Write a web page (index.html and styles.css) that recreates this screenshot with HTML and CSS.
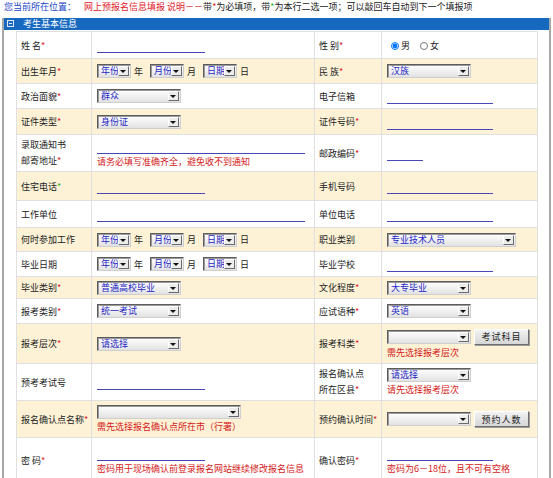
FILE: index.html
```html
<!DOCTYPE html>
<html lang="zh-CN">
<head>
    <meta charset="UTF-8">
    <title>网上预报名信息填报</title>
    <link rel="stylesheet" href="styles.css">
</head>
<body>
    <div class="location">
        <span class="loc-label">您当前所在位置：</span>
        <span class="loc-red">网上预报名信息填报</span>
        <span class="loc-red">说明－－</span>带<span class="req">*</span>为必填项，带<span class="alt-req">*</span>为本行二选一项；可以敲回车自动到下一个填报项
    </div>

    <div class="box">
        <div class="box-title"><span class="toggle"></span>考生基本信息</div>
        <table class="form">
            <colgroup>
                <col class="c-label1">
                <col class="c-value1">
                <col class="c-label2">
                <col class="c-value2">
            </colgroup>
            <tr class="h27">
                <td class="label">姓 名<span class="req">*</span></td>
                <td class="value"><input class="line w108" type="text"></td>
                <td class="label">性 别<span class="req">*</span></td>
                <td class="value">
                    <label class="radio"><input type="radio" name="sex" checked>男</label>
                    <label class="radio"><input type="radio" name="sex">女</label>
                </td>
            </tr>
            <tr class="h25 alt">
                <td class="label">出生年月<span class="req">*</span></td>
                <td class="value">
                    <span class="sel w34"><select><option>年份</option></select></span><span class="unit">年</span>
                    <span class="sel w34"><select><option>月份</option></select></span><span class="unit">月</span>
                    <span class="sel w34"><select><option>日期</option></select></span><span class="unit">日</span>
                </td>
                <td class="label">民 族<span class="req">*</span></td>
                <td class="value"><span class="sel w84"><select><option>汉族</option></select></span></td>
            </tr>
            <tr class="h25">
                <td class="label">政治面貌<span class="req">*</span></td>
                <td class="value"><span class="sel w84"><select><option>群众</option></select></span></td>
                <td class="label">电子信箱</td>
                <td class="value"><input class="line w106" type="text"></td>
            </tr>
            <tr class="h26 alt">
                <td class="label">证件类型<span class="req">*</span></td>
                <td class="value"><span class="sel w84"><select><option>身份证</option></select></span></td>
                <td class="label">证件号码<span class="req">*</span></td>
                <td class="value"><input class="line w106" type="text"></td>
            </tr>
            <tr class="h37">
                <td class="label two">录取通知书<br>邮寄地址<span class="req">*</span></td>
                <td class="value">
                    <input class="line w208" type="text">
                    <div class="note">请务必填写准确齐全，避免收不到通知</div>
                </td>
                <td class="label">邮政编码<span class="req">*</span></td>
                <td class="value"><input class="line w36" type="text"></td>
            </tr>
            <tr class="h29 alt">
                <td class="label">住宅电话<span class="alt-req">*</span></td>
                <td class="value"><input class="line w108" type="text"></td>
                <td class="label">手机号码</td>
                <td class="value"><input class="line w106" type="text"></td>
            </tr>
            <tr class="h27">
                <td class="label">工作单位</td>
                <td class="value"><input class="line w208" type="text"></td>
                <td class="label">单位电话</td>
                <td class="value"><input class="line w106" type="text"></td>
            </tr>
            <tr class="h24 alt">
                <td class="label">何时参加工作</td>
                <td class="value">
                    <span class="sel w34"><select><option>年份</option></select></span><span class="unit">年</span>
                    <span class="sel w34"><select><option>月份</option></select></span><span class="unit">月</span>
                    <span class="sel w34"><select><option>日期</option></select></span><span class="unit">日</span>
                </td>
                <td class="label">职业类别</td>
                <td class="value"><span class="sel w129"><select><option>专业技术人员</option></select></span></td>
            </tr>
            <tr class="h25">
                <td class="label">毕业日期</td>
                <td class="value">
                    <span class="sel w34"><select><option>年份</option></select></span><span class="unit">年</span>
                    <span class="sel w34"><select><option>月份</option></select></span><span class="unit">月</span>
                    <span class="sel w34"><select><option>日期</option></select></span><span class="unit">日</span>
                </td>
                <td class="label">毕业学校</td>
                <td class="value"><input class="line w106" type="text"></td>
            </tr>
            <tr class="h22 alt">
                <td class="label">毕业类别<span class="req">*</span></td>
                <td class="value"><span class="sel w84"><select><option>普通高校毕业</option></select></span></td>
                <td class="label">文化程度<span class="req">*</span></td>
                <td class="value"><span class="sel w84"><select><option>大专毕业</option></select></span></td>
            </tr>
            <tr class="h25">
                <td class="label">报考类别<span class="req">*</span></td>
                <td class="value"><span class="sel w84"><select><option>统一考试</option></select></span></td>
                <td class="label">应试语种<span class="req">*</span></td>
                <td class="value"><span class="sel w84"><select><option>英语</option></select></span></td>
            </tr>
            <tr class="h40 alt">
                <td class="label">报考层次<span class="req">*</span></td>
                <td class="value"><span class="sel w84"><select><option>请选择</option></select></span></td>
                <td class="label">报考科类<span class="req">*</span></td>
                <td class="value">
                    <span class="sel w84"><select><option></option></select></span><button class="btn">考试科目</button>
                    <div class="note">需先选择报考层次</div>
                </td>
            </tr>
            <tr class="h37">
                <td class="label">预考考试号</td>
                <td class="value"><input class="line w108" type="text"></td>
                <td class="label two">报名确认点<br>所在区县<span class="req">*</span></td>
                <td class="value">
                    <span class="sel w84"><select><option>请选择</option></select></span>
                    <div class="note">请先选择报考层次</div>
                </td>
            </tr>
            <tr class="h37 alt">
                <td class="label">报名确认点名称<span class="req">*</span></td>
                <td class="value">
                    <span class="sel w144"><select><option></option></select></span>
                    <div class="note">需先选择报名确认点所在市（行署）</div>
                </td>
                <td class="label">预约确认时间<span class="req">*</span></td>
                <td class="value"><span class="sel w84"><select><option></option></select></span><button class="btn">预约人数</button></td>
            </tr>
            <tr class="h45">
                <td class="label">密 码<span class="req">*</span></td>
                <td class="value">
                    <input class="line w108" type="password">
                    <div class="note">密码用于现场确认前登录报名网站继续修改报名信息</div>
                </td>
                <td class="label">确认密码<span class="req">*</span></td>
                <td class="value">
                    <input class="line w106" type="password">
                    <div class="note">密码为6－18位，且不可有空格</div>
                </td>
            </tr>
        </table>
    </div>
</body>
</html>
```

FILE: styles.css
```css
body {
    margin: 0;
    font-family: "Noto Sans CJK SC", "Noto Sans", sans-serif;
    font-size: 9px;
    color: #222;
    background: #fff;
}

.location {
    height: 18px;
    line-height: 14px;
    padding-left: 4px;
    white-space: nowrap;
}

.loc-label {
    color: #2446c8;
    margin-right: 6px;
}

.loc-red {
    color: #e0202a;
}

.req {
    color: #e0202a;
}

.alt-req {
    color: #2fb52f;
}

.box {
    margin-left: 2px;
    width: 545px;
    height: 460px;
    border-left: 2px solid #a8a8a8;
    border-right: 2px solid #a8a8a8;
}

.box-title {
    height: 12px;
    line-height: 12px;
    padding-left: 3px;
    background: #1769c0;
    color: #fff;
}

.toggle {
    display: inline-block;
    position: relative;
    width: 5px;
    height: 5px;
    margin-right: 9px;
    border: 1px solid #dfe9f5;
    vertical-align: 0;
}

.toggle::after {
    content: "";
    position: absolute;
    left: 1px;
    top: 2px;
    width: 3px;
    height: 1px;
    background: #dfe9f5;
}

.form {
    margin: 1px 0 0 12px;
    width: 521px;
    border-collapse: collapse;
    table-layout: fixed;
    border: 1px solid #d9d9d9;
}

.c-label1 { width: 75px; }
.c-value1 { width: 223px; }
.c-label2 { width: 67px; }
.c-value2 { width: 156px; }

.form td {
    border: 1px solid #e0e0e0;
    padding: 0;
    vertical-align: middle;
    white-space: nowrap;
}

.form td.label {
    padding-left: 4px;
}

.form td.two {
    line-height: 16px;
}

.form td.value {
    padding-left: 5px;
}

.alt td {
    background: #fdf2d6;
}

.h22 td { height: 21px; }
.h24 td { height: 23px; }
.h25 td { height: 24px; }
.h26 td { height: 25px; }
.h27 td { height: 26px; }
.h29 td { height: 28px; }
.h37 td { height: 36px; }
.h40 td { height: 39px; }
.h45 td { height: 44px; }

.line {
    display: inline-block;
    box-sizing: border-box;
    height: 13px;
    margin: 0;
    padding: 0;
    border: 0;
    border-bottom: 1px solid #4646b4;
    background: transparent;
    vertical-align: -4px;
    outline: none;
}

.w36 { width: 36px; }
.w106 { width: 106px; }
.w108 { width: 108px; }
.w208 { width: 208px; }

.note {
    color: #d42020;
    line-height: 13px;
    margin-top: 1px;
}

.sel {
    display: inline-block;
    position: relative;
    box-sizing: border-box;
    height: 14px;
    border: 1px solid;
    border-color: #5c5c5c #cfcfcf #cfcfcf #5c5c5c;
    box-shadow: inset 1px 1px 0 #9a9a9a;
    background: linear-gradient(#ffffff, #e2e2e2);
    vertical-align: middle;
}

.sel select {
    appearance: none;
    -webkit-appearance: none;
    display: block;
    width: 100%;
    height: 12px;
    margin: 0;
    padding: 0 0 0 3px;
    border: 0;
    background: transparent;
    font: inherit;
    line-height: 12px;
    color: #1f1fc4;
    outline: none;
}

.sel::after {
    content: "";
    position: absolute;
    right: 1px;
    top: 1px;
    width: 9px;
    height: 8px;
    background: #ececec;
    border: 1px solid;
    border-color: #fff #6a6a6a #6a6a6a #fff;
}

.sel::before {
    content: "";
    position: absolute;
    right: 4px;
    top: 5px;
    border-left: 3px solid transparent;
    border-right: 3px solid transparent;
    border-top: 3px solid #111;
    z-index: 1;
}

.w34 { width: 34px; }
.w84 { width: 84px; }
.w129 { width: 129px; }
.w144 { width: 144px; }

.unit {
    margin: 0 5px 0 3px;
    vertical-align: middle;
}

.radio {
    display: inline-block;
    margin-right: 4px;
    vertical-align: middle;
}

.radio input {
    width: 8px;
    height: 8px;
    margin: 0 2px 0 4px;
    vertical-align: -1px;
}

.btn {
    height: 16px;
    width: 55px;
    margin-left: 3px;
    padding: 0;
    font: inherit;
    letter-spacing: 1px;
    color: #222;
    background: linear-gradient(#f2f2f2, #d6d6d6);
    border: 1px solid;
    border-color: #fff #6e6e6e #6e6e6e #fff;
    box-shadow: 1px 1px 0 #9c9c9c;
    vertical-align: middle;
}
```
